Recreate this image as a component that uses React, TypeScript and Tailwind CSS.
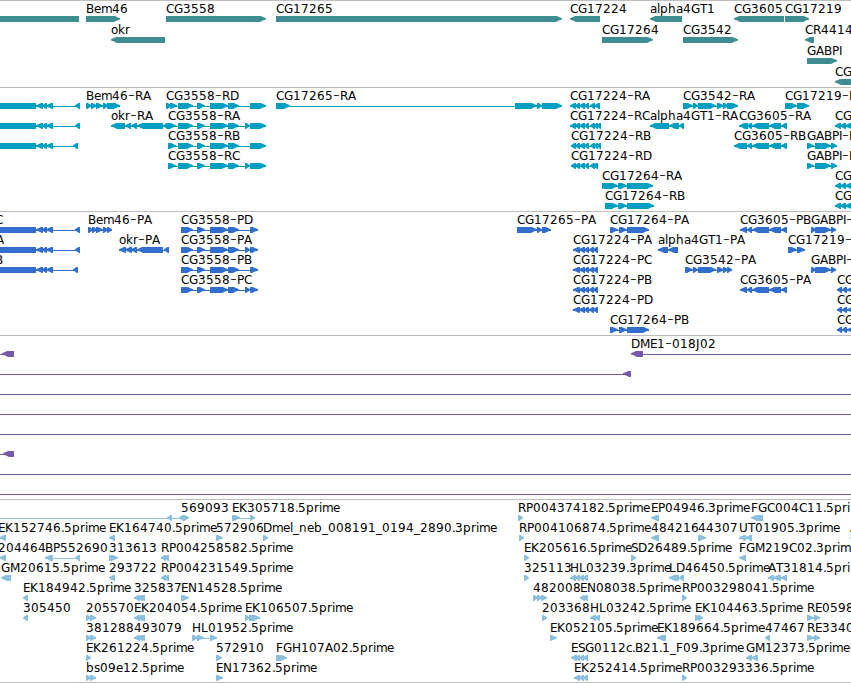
import React from 'react';

type Exon = [number, number];

interface Feature {
    label?: string;
    at: number;
    dir: '>' | '<' | '|';
    exons: Exon[];
    from?: number;
    to?: number;
}

interface Track {
    name: string;
    color: string;
    rowHeight: string;
    height: string;
    rows: Feature[][];
}

const VIEW_WIDTH = 851;

// Whole-pixel advances for the 12px label font
const ADVANCE: Record<string, number> = {
    A: 8, B: 8, C: 8, D: 9, E: 7, F: 7, G: 9, H: 9, I: 3, J: 4, K: 8, L: 7, M: 10, N: 9, P: 7, R: 8, S: 7, T: 7, U: 9,
    a: 7, b: 8, c: 6, e: 7, h: 8, i: 3, k: 7, l: 3, m: 11, n: 8, o: 7, p: 8, r: 5, s: 6, '-': 7, '.': 3, _: 6,
};

const f = (label: string, at: number, dir: Feature['dir'], ...exons: Exon[]): Feature => ({ label, at, dir, exons });
const line = (from: number, to: number): Feature => ({ at: 0, dir: '|', exons: [], from, to });

// Exon sets shared by several transcripts
const leftTail: Exon[] = [[36, 43], [42, 47], [46, 53]];
const left = (label: string, at: number, end: number): Feature[] => [
    f('', 0, '|', [-10, 36]),
    { ...f(label, at, '<', ...leftTail, [end - 5, end]) },
];
const cg3558: Exon[] = [[197, 205], [210, 228], [228, 239]];
const cg17224: Exon[] = [[575, 580], [579, 585], [584, 589], [590, 595]];
const cg3605: Exon[] = [[747, 752], [752, 769], [769, 781], [781, 787]];
const edge: Exon[] = [[835, 841], [840, 846], [845, 856]];
const edgeP: Exon[] = [[837, 842], [842, 847], [847, 856]];
const gabpi: Exon[] = [[807, 814], [815, 831], [831, 837]];
const gabpiP: Exon[] = [[811, 816], [815, 831], [831, 836]];
const cg17224P: Exon[] = [[573, 580], [579, 585], [584, 589], [589, 594], [593, 598]];
const trio: Exon[] = [[134, 140], [138, 143], [141, 145]];

const genes: Feature[][] = [
    [
        f('', 0, '|', [0, 79]),
        f('Bem46', 86, '>', [86, 120]),
        f('CG3558', 166, '>', [166, 266]),
        f('CG17265', 276, '>', [276, 562]),
        f('CG17224', 570, '<', [570, 600]),
        f('alpha4GT1', 650, '<', [650, 682]),
        f('CG3605', 734, '<', [734, 784]),
        f('CG17219', 785, '>', [785, 809]),
    ],
    [
        f('okr', 111, '<', [111, 165]),
        f('CG17264', 602, '>', [602, 653]),
        f('CG3542', 683, '>', [683, 738]),
        f('CR4414', 805, '<', [805, 814]),
    ],
    [f('GABPI', 807, '>', [807, 837])],
    [f('CG', 835, '<', [835, 860])],
];

const transcripts: Feature[][] = [
    [
        ...left('', 0, 80),
        f('Bem46-RA', 86, '>', [86, 92], [91, 97], [96, 103], [103, 108], [107, 120]),
        f('CG3558-RD', 166, '>', [166, 172], [170, 177], [178, 193], ...cg3558, [250, 266]),
        f('CG17265-RA', 276, '>', [276, 290], [515, 537], [537, 542], [542, 562]),
        f('CG17224-RA', 570, '<', [570, 576], ...cg17224, [594, 600]),
        f('CG3542-RA', 683, '>', [683, 693], [693, 698], [698, 716], [717, 724], [723, 728], [727, 738]),
        f('CG17219-R', 785, '>', [785, 797], [797, 809]),
    ],
    [
        ...left('', 0, 80),
        f('okr-RA', 111, '<', [111, 125], [125, 131], [131, 137], [137, 163], [163, 168]),
        f('CG3558-RA', 168, '>', [168, 176], [178, 193], ...cg3558, [245, 250], [250, 266]),
        f('CG17224-RC', 570, '<', [570, 576], ...cg17224, [594, 598], [597, 601]),
        f('alpha4GT1-RA', 650, '<', [650, 669], [669, 679], [679, 684]),
        f('CG3605-RA', 739, '<', [739, 748], ...cg3605),
        f('CG', 835, '<', ...edge),
    ],
    [
        ...left('', 0, 78),
        f('CG3558-RB', 168, '>', [168, 176], [178, 193], ...cg3558, [250, 266]),
        f('CG17224-RB', 571, '<', [571, 576], ...cg17224, [594, 598], [597, 601]),
        f('CG3605-RB', 734, '<', [734, 747], ...cg3605),
        f('GABPI-R', 807, '>', ...gabpi),
    ],
    [
        f('CG3558-RC', 168, '>', [168, 176], [178, 193], ...cg3558, [245, 250], [250, 266]),
        f('CG17224-RD', 571, '<', [571, 576], ...cg17224, [593, 598]),
        f('GABPI-R', 807, '>', ...gabpi),
    ],
    [
        f('CG17264-RA', 602, '>', [602, 606], [604, 618], [618, 627], [627, 653]),
        f('CG', 835, '<', ...edge),
    ],
    [
        f('CG17264-RB', 605, '>', [605, 618], [618, 627], [627, 654]),
        f('CG', 835, '<', ...edge),
    ],
];

const proteins: Feature[][] = [
    [
        ...left('C', -5, 80),
        f('Bem46-PA', 88, '>', [88, 93], [92, 97], [96, 103], [103, 108], [107, 112]),
        f('CG3558-PD', 181, '>', [181, 193], ...cg3558, [250, 258]),
        f('CG17265-PA', 517, '>', [517, 537], [537, 542], [542, 551]),
        f('CG17264-PA', 610, '>', [610, 618], [619, 627], [627, 649]),
        f('CG3605-PB', 740, '<', [740, 747], ...cg3605),
        f('GABPI-', 811, '>', ...gabpiP),
    ],
    [
        ...left('A', -4, 80),
        f('okr-PA', 119, '<', [119, 126], [125, 132], [131, 137], [137, 163], [164, 169]),
        f('CG3558-PA', 181, '>', [181, 193], ...cg3558, [245, 250], [250, 258]),
        f('CG17224-PA', 573, '<', ...cg17224P),
        f('alpha4GT1-PA', 658, '<', [658, 668], [668, 678]),
        f('CG17219-', 788, '>', [788, 797], [797, 805]),
    ],
    [
        ...left('B', -5, 78),
        f('CG3558-PB', 181, '>', [181, 193], ...cg3558, [250, 258]),
        f('CG17224-PC', 573, '<', ...cg17224P),
        f('CG3542-PA', 685, '>', [685, 693], [693, 698], [698, 716], [717, 724], [723, 728], [727, 732]),
        f('GABPI-', 811, '>', ...gabpiP),
    ],
    [
        f('CG3558-PC', 181, '>', [181, 193], ...cg3558, [245, 250], [250, 258]),
        f('CG17224-PB', 573, '<', ...cg17224P),
        f('CG3605-PA', 740, '<', [740, 747], ...cg3605),
        f('CG', 837, '<', ...edgeP),
    ],
    [f('CG17224-PD', 573, '<', ...cg17224P), f('CG', 837, '<', ...edgeP)],
    [f('CG17264-PB', 610, '>', [610, 618], [619, 627], [627, 649]), f('CG', 837, '<', ...edgeP)],
];

const clones: Feature[][] = [
    [line(0, 4), f('', 0, '<', [2, 14]), line(643, 851), f('DME1-018J02', 631, '<', [631, 643])],
    [line(0, 624), f('', 0, '<', [623, 631])],
    [line(0, 851)],
    [line(0, 851)],
    [line(0, 851)],
    [line(0, 4), f('', 0, '<', [3, 14])],
    [line(0, 851)],
    [line(0, 851)],
];

const ests: Feature[][] = [
    [
        line(0, 180),
        f('', 0, '<', [167, 172]),
        f('', 0, '<', [179, 184]),
        f('569093', 181, '>', [183, 189]),
        f('EK305718.5prime', 232, '>', [232, 240], [250, 255]),
        f('RP004374182.5prime', 518, '>', [518, 523]),
        f('EP04946.3prime', 651, '<', [651, 659]),
        f('FGC004C11.5pri', 751, '<', [751, 763]),
    ],
    [
        f('EK152746.5prime', -2, '<', [-1, 6]),
        f('EK164740.5prime', 109, '<', [109, 115]),
        f('572906', 216, '>', [216, 223]),
        f('Dmel_neb_008191_0194_2890.3prime', 263, '>', [263, 268]),
        f('RP004106874.5prime', 519, '>', [519, 524]),
        f('484216', 651, '<', [651, 659]),
        f('44307', 698, '>', [698, 706]),
        f('UT01905.3prime', 739, '<', [739, 746], [745, 752]),
        f('A', 850, '<', [850, 860]),
    ],
    [
        f('204464', -2, '<', [-1, 6]),
        f('BP552690', 45, '<', [45, 53], [75, 80]),
        f('313613', 109, '>', [109, 118]),
        f('RP004258582.5prime', 161, '<', [161, 166], [164, 169]),
        f('EK205616.5prime', 524, '>', [524, 529]),
        f('SD26489.5prime', 631, '>', [631, 636]),
        f('FGM219C02.3prim', 739, '<', [739, 746]),
    ],
    [
        f('GM20615.5prime', 1, '<', [1, 11]),
        f('293722', 109, '<', [109, 115]),
        f('RP004231549.5prime', 161, '<', [161, 166], [164, 169]),
        f('325113', 524, '>', [524, 529]),
        f('HL03239.3prime', 570, '<', [570, 576], [575, 580], [579, 584], [583, 588]),
        f('LD46450.5prime', 669, '<', [669, 679], [679, 684]),
        f('AT31814.5pri', 768, '<', [768, 774], [773, 781], [781, 787]),
    ],
    [
        f('EK184942.5prime', 23, '<', [23, 28]),
        f('325837', 134, '<', ...trio),
        f('EN14528.5prime', 181, '>', [181, 189]),
        f('482008', 533, '>', [533, 538], [537, 542], [541, 547]),
        f('EN08038.5prime', 580, '<', [580, 585], [583, 588]),
        f('RP003298041.5prime', 682, '>', [682, 687]),
    ],
    [
        f('305450', 23, '<', [23, 28]),
        f('205570', 86, '>', [86, 91], [90, 96]),
        f('EK204054.5prime', 134, '<', ...trio),
        f('EK106507.5prime', 245, '>', [245, 250], [249, 260]),
        f('203368', 542, '>', [542, 547]),
        f('HL03242.5prime', 590, '<', [590, 596], [595, 600]),
        f('EK104463.5prime', 695, '>', [695, 700], [698, 703]),
        f('RE0598', 807, '>', [807, 814], [814, 820]),
    ],
    [
        f('381288', 86, '>', [86, 91], [90, 96]),
        f('493079', 134, '<', ...trio),
        f('HL01952.5prime', 192, '>', [192, 198], [197, 204], [210, 217]),
        f('EK052105.5prime', 550, '>', [550, 557]),
        f('EK189664.5prime', 657, '<', [657, 666]),
        f('47467', 765, '<', [765, 770]),
        f('RE3340', 807, '>', [807, 814], [814, 820]),
    ],
    [
        f('EK261224.5prime', 86, '>', [86, 91]),
        f('572910', 216, '>', [216, 222]),
        f('FGH107A02.5prime', 276, '>', [276, 287]),
        f('ESG0112c.B21.1_F09.3prime', 571, '<', [571, 577], [575, 580], [579, 584], [583, 588]),
        f('GM12373.5prime', 746, '<', [746, 752], [751, 758]),
    ],
    [
        f('bs09e12.5prime', 86, '>', [86, 91], [90, 96]),
        f('EN17362.5prime', 216, '>', [216, 223]),
        f('EK252414.5prime', 574, '<', [574, 580], [579, 584], [583, 588]),
        f('RP003293336.5prime', 682, '>', [682, 687]),
    ],
];

const tracks: Track[] = [
    { name: 'genes', color: '#408c93', rowHeight: 'h-[21px]', height: 'h-[87px]', rows: genes },
    { name: 'transcripts', color: '#009fc1', rowHeight: 'h-5', height: 'h-[124px]', rows: transcripts },
    { name: 'proteins', color: '#326ecd', rowHeight: 'h-5', height: 'h-[124px]', rows: proteins },
    { name: 'clones', color: '#7859a7', rowHeight: 'h-5', height: 'h-[164px]', rows: clones },
    { name: 'ests', color: '#8abfdf', rowHeight: 'h-5', height: 'h-[183px]', rows: ests },
];

// Arrow heads bulge a little towards the tip
const exonPoints = ([start, end]: Exon, dir: Feature['dir']) => {
    if (dir === '|') {
        return `${start},14 ${end},14 ${end},20 ${start},20`;
    }
    const [back, tip, sign] = dir === '>' ? [start, end, -1] : [end, start, 1];
    const head = Math.min(6, end - start - 1) * sign;
    return [
        [back, 14],
        [tip + head * 0.85, 14],
        [tip + head * 0.4, 15.3],
        [tip, 16.3],
        [tip, 17.5],
        [tip + head * 0.5, 18.6],
        [tip + head, 20],
        [back, 20],
    ]
        .map((point) => point.join())
        .join(' ');
};

const advance = (text: string) => text.split('').reduce((sum, ch) => sum + (ADVANCE[ch] ?? 8), 0);

const charPositions = (text: string, start: number) =>
    text
        .split('')
        .map((_, i) => start + advance(text.slice(0, i)))
        .join(' ');

const Label: React.FC<{ text: string; at: number }> = ({ text, at }) => {
    const dash = text.indexOf('-');
    if (dash < 0) {
        return (
            <text x={charPositions(text, at)} y={11}>
                {text}
            </text>
        );
    }
    const head = text.slice(0, dash);
    const tail = text.slice(dash + 1);
    const dashAt = at + advance(head);
    return (
        <text y={11}>
            <tspan x={charPositions(head, at)}>{head}</tspan>
            <tspan x={dashAt} y={12} className="text-[19px] font-extralight">-</tspan>
            {tail && (
                <tspan x={charPositions(tail, dashAt + ADVANCE['-'])} y={11}>
                    {tail}
                </tspan>
            )}
        </text>
    );
};

const FeatureGlyph: React.FC<{ feature: Feature; color: string }> = ({ feature, color }) => {
    const { label, at, dir, exons } = feature;
    const from = feature.from ?? exons[0][0];
    const to = feature.to ?? exons[exons.length - 1][1];
    const hasLine = exons.length !== 1;
    return (
        <g>
            {hasLine && <rect x={from} y={17} width={to - from} height={1} fill={color} />}
            {exons.map((exon) => (
                <polygon key={exon.join()} points={exonPoints(exon, dir)} fill={color} />
            ))}
            {label && <Label text={label} at={at} />}
        </g>
    );
};

export default function App() {
    return (
        <main className="flex h-[683px] w-[851px] flex-col overflow-hidden border-b border-[#bebebe] bg-white font-['DejaVu_Sans',sans-serif] text-[12px]">
            {tracks.map((track) => (
                <section key={track.name} className={`flex shrink-0 flex-col border-t border-[#bebebe] pt-px ${track.height}`}>
                    {track.rows.map((row, i) => (
                        <svg key={i} width={VIEW_WIDTH} className={`block shrink-0 overflow-visible fill-black ${track.rowHeight}`}>
                            {row.map((feature, j) => (
                                <FeatureGlyph key={j} feature={feature} color={track.color} />
                            ))}
                        </svg>
                    ))}
                </section>
            ))}
        </main>
    );
}
